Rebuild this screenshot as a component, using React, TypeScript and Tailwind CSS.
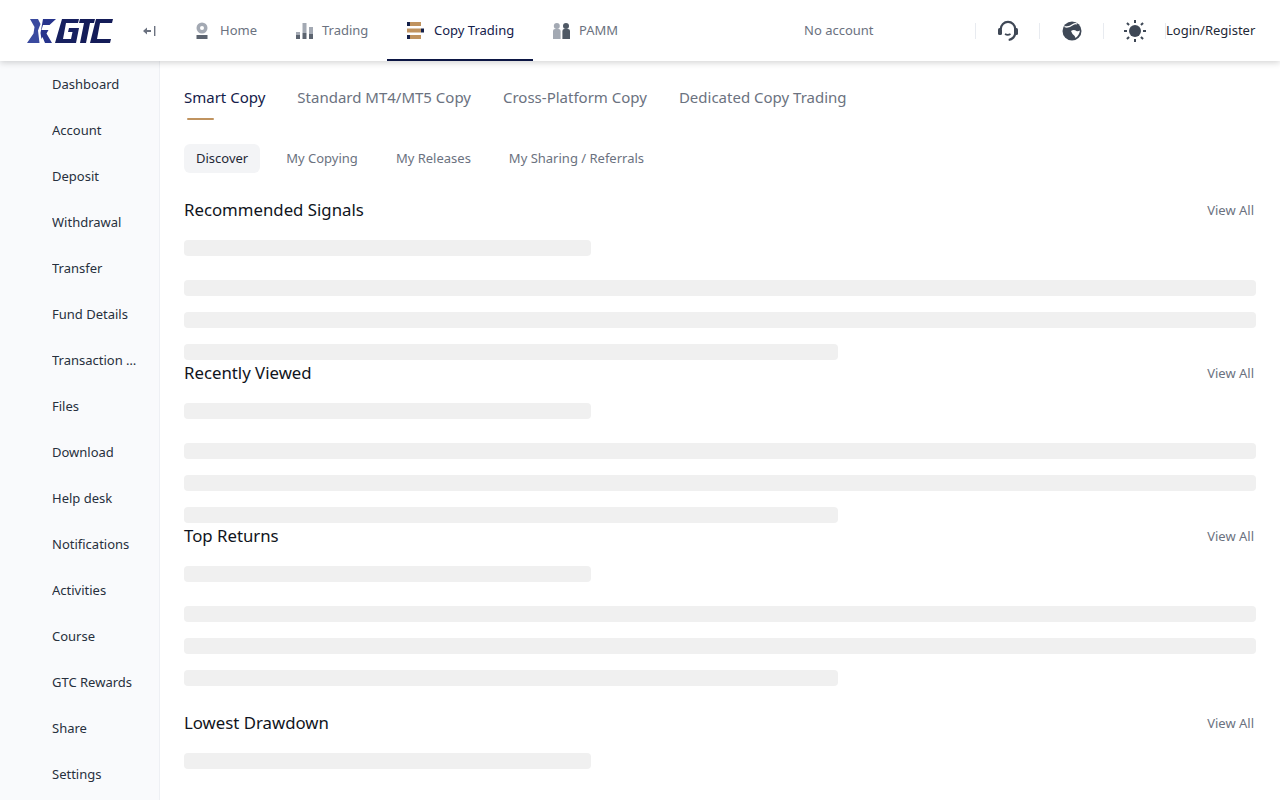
const sideItems = [
    'Dashboard',
    'Account',
    'Deposit',
    'Withdrawal',
    'Transfer',
    'Fund Details',
    'Transaction History',
    'Files',
    'Download',
    'Help desk',
    'Notifications',
    'Activities',
    'Course',
    'GTC Rewards',
    'Share',
    'Settings',
];

const Logo = () => (
    <svg width="86" height="26" viewBox="0 0 86 26" className="shrink-0">
        <path d="M3 1h8l2.500 5-2.500 6.500L12.500 25H0l6.500-9.500L7.500 9z" fill="#3a4a9f" />
        <path d="M16 1h13l-6.500 6H16l-1.500 5h7l-2 3.500L25 25h-7l-2.500-6-1 2-1-6z" fill="#27348c" />
        <path d="M35 1h17l-1 4H39l-3 16h8l1.500-7H41l1-4h10l-3 15H28z" fill="#17205f" />
        <path d="M53 1h15l-1 4h-4l-4 20h-6l4-20h-5z" fill="#141c58" />
        <path d="M69 1h17l-1 4H73l-3 16h14l-1 4H63z" fill="#141c58" />
    </svg>
);

const HomeIcon = () => (
    <svg width="14" height="17" viewBox="0 0 14 17">
        <circle cx="7" cy="6" r="5.500" fill="#a3a9b3" />
        <circle cx="7" cy="6" r="2" fill="#fff" />
        <rect x="1.500" y="13" width="11" height="4" fill="#5c6470" />
    </svg>
);

const TradingIcon = () => (
    <svg width="17" height="17" viewBox="0 0 17 17">
        <rect x="0" y="10" width="4" height="3" fill="#a3a9b3" />
        <rect x="0" y="13" width="4" height="4" fill="#5c6470" />
        <rect x="6.500" y="1" width="4" height="10" fill="#a3a9b3" />
        <rect x="6.500" y="11" width="4" height="6" fill="#5c6470" />
        <rect x="13" y="5" width="4" height="7" fill="#a3a9b3" />
        <rect x="13" y="12" width="4" height="5" fill="#5c6470" />
    </svg>
);

const CopyIcon = () => (
    <svg width="17" height="17" viewBox="0 0 17 17">
        <rect x="0" y="0" width="3" height="4" fill="#14204a" />
        <rect x="3" y="0" width="11" height="4" fill="#c0935f" />
        <rect x="0" y="6.500" width="14" height="4" fill="#c0935f" />
        <rect x="14" y="6.500" width="3" height="4" fill="#14204a" />
        <rect x="0" y="13" width="3" height="4" fill="#14204a" />
        <rect x="3" y="13" width="11" height="4" fill="#c0935f" />
    </svg>
);

const PammIcon = () => (
    <svg width="17" height="16" viewBox="0 0 17 16">
        <circle cx="3.800" cy="3" r="3" fill="#a3a9b3" />
        <path d="M0 8a2 2 0 0 1 2-2h3.600a2 2 0 0 1 2 2v8H0z" fill="#a3a9b3" />
        <circle cx="13" cy="3" r="3" fill="#4f5965" />
        <path d="M9.400 8a2 2 0 0 1 2-2H15a2 2 0 0 1 2 2v8H9.400z" fill="#4f5965" />
    </svg>
);

const HeadsetIcon = () => (
    <svg width="22" height="22" viewBox="0 0 22 22" fill="none">
        <path d="M3.800 9a7.200 7.200 0 0 1 14.400 0v4c0 3.500-3 6.500-6.500 7" stroke="#3f4856" strokeWidth="2.200" />
        <rect x="1" y="8" width="4" height="7" rx="1.500" fill="#3f4856" />
        <rect x="17" y="8" width="4" height="7" rx="1.500" fill="#3f4856" />
        <path d="M8 14c1.500 1 4 1 5.500 0" stroke="#3f4856" strokeWidth="1.600" />
    </svg>
);

const GlobeIcon = () => (
    <svg width="20" height="20" viewBox="0 0 20 20" fill="none">
        <circle cx="10" cy="10" r="9.500" fill="#3f4856" />
        <path d="M2.500 5.500C6 7 9 5 11 3.500c1.500-1 3-1 4-.5" stroke="#fff" strokeWidth="1.300" />
        <path d="M9 10c2-1.500 4-1 5.500 0 1 .5 2.500 0 3.500-.5-.5 3-2 5.500-4.500 7.500-.5-2.500-2-3-3-4-.5-.8-1-2-1.500-3z" fill="#fff" />
    </svg>
);

const SunIcon = () => (
    <svg width="22" height="22" viewBox="0 0 22 22" fill="#3f4856">
        <circle cx="11" cy="11" r="6" />
        <rect x="10" y="0" width="2" height="3" />
        <rect x="10" y="19" width="2" height="3" />
        <rect x="0" y="10" width="3" height="2" />
        <rect x="19" y="10" width="3" height="2" />
        <rect x="3" y="2.500" width="2" height="3" transform="rotate(-45 4 4)" />
        <rect x="17" y="2.500" width="2" height="3" transform="rotate(45 18 4)" />
        <rect x="3" y="16.500" width="2" height="3" transform="rotate(45 4 18)" />
        <rect x="17" y="16.500" width="2" height="3" transform="rotate(-45 18 18)" />
    </svg>
);

const Section = ({ title, height, full }: { title: string; height: string; full?: boolean }) => (
    <section className={height}>
        <div className="flex items-center justify-between h-[30px] pr-0.5">
            <h2 className="text-[16.800px] text-[#0f1420]">{title}</h2>
            <a className="pt-0.5 text-[13px] text-[#6b7280]">View All</a>
        </div>
        <div className="mt-[15px] h-4 w-[38%] rounded bg-[#f0f0f0]" />
        {full && (
            <div className="mt-6 flex flex-col gap-4">
                <div className="h-4 rounded bg-[#f0f0f0]" />
                <div className="h-4 rounded bg-[#f0f0f0]" />
                <div className="h-4 w-[61%] rounded bg-[#f0f0f0]" />
            </div>
        )}
    </section>
);

const App = () => {
    return (
        <div className="flex flex-col h-[800px] overflow-hidden bg-white font-['Noto_Sans',sans-serif]">
            <header className="relative z-10 flex items-center h-[61px] shrink-0 bg-white whitespace-nowrap shadow-[0_2px_6px_rgba(0,0,0,0.16)]">
                <div className="ml-[27px] w-[86px]">
                    <Logo />
                </div>
                <span className="ml-[30px] w-[13px] flex items-center">
                    <svg width="13" height="10" viewBox="0 0 13 10" fill="#6b7280">
                        <path d="M0 5l4-3.500V4h4v2H4v2.500z" />
                        <rect x="11" y="0" width="1.400" height="10" />
                    </svg>
                </span>
                <nav className="flex h-full ml-[18px] text-[13px] text-[#6b7280]">
                    <a className="flex items-center gap-[11px] pl-[21px] w-[101px] shrink-0"><HomeIcon /><span>Home</span></a>
                    <a className="flex items-center gap-[9px] pl-[21px] w-[112px] shrink-0"><TradingIcon /><span>Trading</span></a>
                    <a className="flex items-center gap-2.5 pl-5 w-[146px] shrink-0 text-[#14204a] border-y-2 border-t-transparent border-b-[#0c1644]"><CopyIcon /><span>Copy Trading</span></a>
                    <a className="flex items-center gap-[9px] pl-5 shrink-0"><PammIcon /><span>PAMM</span></a>
                </nav>
                <span className="ml-auto text-[13px] text-[#6b7280] w-[171px]">No account</span>
                <div className="flex items-center h-4 w-16 justify-center border-l border-[#e8ebf0]">
                    <HeadsetIcon />
                </div>
                <div className="flex items-center h-4 w-16 justify-center border-l border-[#e8ebf0]">
                    <GlobeIcon />
                </div>
                <div className="flex items-center h-4 w-[63px] justify-center border-x border-[#e8ebf0]">
                    <SunIcon />
                </div>
                <a className="w-[90px] text-[13px] text-[#1f2937] mr-6">Login/Register</a>
            </header>
            <div className="flex flex-1 min-h-0">
                <aside className="w-40 shrink-0 bg-[#f9fafc] border-r border-[#eef0f4] pl-[52px] pr-4 pt-[1px]">
                    {sideItems.map((item) => (
                        <div key={item} className="flex items-center h-[46px] text-[13px] text-[#27303d]">
                            <span className="block w-full truncate">{item}</span>
                        </div>
                    ))}
                </aside>
                <main className="flex-1 min-w-0 px-6 pt-6 overflow-hidden">
                    <div className="flex gap-8 text-[15px] leading-6 text-[#6b7280]">
                        <div className="flex flex-col">
                            <span className="text-[#14204a]">Smart Copy</span>
                            <span className="mt-[9px] ml-[3px] h-0.5 w-[27px] rounded bg-[#c0935f]" />
                        </div>
                        <span>Standard MT4/MT5 Copy</span>
                        <span>Cross-Platform Copy</span>
                        <span>Dedicated Copy Trading</span>
                    </div>
                    <div className="flex gap-[14px] mt-6 text-[13px] text-[#6b7280]">
                        <span className="flex items-center h-[29px] px-3 rounded-md bg-[#f3f4f6] text-[#1f2937]">Discover</span>
                        <span className="flex items-center h-[29px] px-3">My Copying</span>
                        <span className="flex items-center h-[29px] px-3">My Releases</span>
                        <span className="flex items-center h-[29px] px-3">My Sharing / Referrals</span>
                    </div>
                    <div className="mt-[22px]">
                        <Section title="Recommended Signals" height="h-[163px]" full />
                        <Section title="Recently Viewed" height="h-[163px]" full />
                        <Section title="Top Returns" height="h-[187px]" full />
                        <Section title="Lowest Drawdown" height="h-[78px]" />
                    </div>
                </main>
            </div>
        </div>
    );
};

export default App;
